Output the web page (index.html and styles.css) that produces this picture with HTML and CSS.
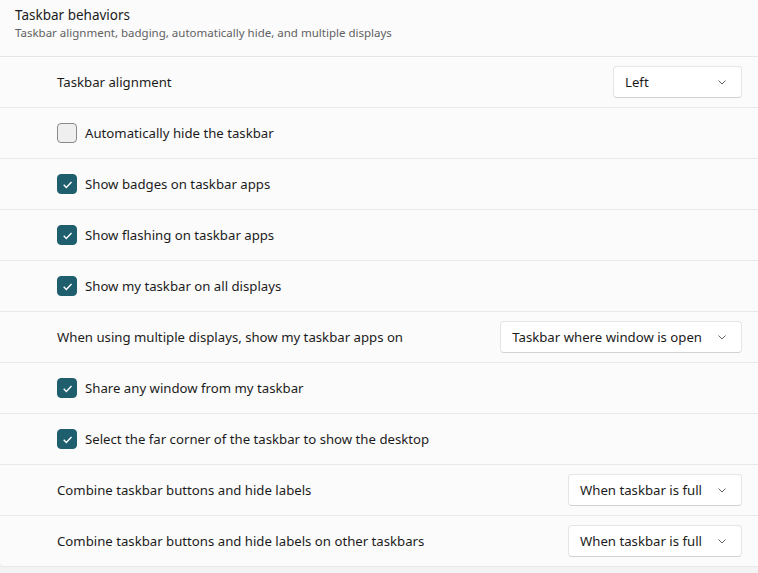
FILE: index.html
```html
<!DOCTYPE html>
<html lang="en">
<head>
    <meta charset="UTF-8">
    <meta name="viewport" content="width=device-width, initial-scale=1.0">
    <title>Taskbar behaviors</title>
    <link rel="stylesheet" href="styles.css">
</head>
<body>
    <div class="card">
        <div class="card-header">
            <div class="title">Taskbar behaviors</div>
            <div class="subtitle">Taskbar alignment, badging, automatically hide, and multiple displays</div>
        </div>
        <div class="row">
            <span class="label">Taskbar alignment</span>
            <div class="select">Left <svg class="chev" viewBox="0 0 8 5"><path d="M0.5 0.5l3.5 3.5 3.5-3.5"/></svg></div>
        </div>
        <div class="row">
            <span class="box"></span>
            <span class="label">Automatically hide the taskbar</span>
        </div>
        <div class="row">
            <span class="box on"><svg viewBox="0 0 12 12"><path d="M2.5 6.3l2.4 2.4 4.8-5"/></svg></span>
            <span class="label">Show badges on taskbar apps</span>
        </div>
        <div class="row">
            <span class="box on"><svg viewBox="0 0 12 12"><path d="M2.5 6.3l2.4 2.4 4.8-5"/></svg></span>
            <span class="label">Show flashing on taskbar apps</span>
        </div>
        <div class="row">
            <span class="box on"><svg viewBox="0 0 12 12"><path d="M2.5 6.3l2.4 2.4 4.8-5"/></svg></span>
            <span class="label">Show my taskbar on all displays</span>
        </div>
        <div class="row">
            <span class="label">When using multiple displays, show my taskbar apps on</span>
            <div class="select">Taskbar where window is open <svg class="chev" viewBox="0 0 8 5"><path d="M0.5 0.5l3.5 3.5 3.5-3.5"/></svg></div>
        </div>
        <div class="row">
            <span class="box on"><svg viewBox="0 0 12 12"><path d="M2.5 6.3l2.4 2.4 4.8-5"/></svg></span>
            <span class="label">Share any window from my taskbar</span>
        </div>
        <div class="row">
            <span class="box on"><svg viewBox="0 0 12 12"><path d="M2.5 6.3l2.4 2.4 4.8-5"/></svg></span>
            <span class="label">Select the far corner of the taskbar to show the desktop</span>
        </div>
        <div class="row">
            <span class="label">Combine taskbar buttons and hide labels</span>
            <div class="select">When taskbar is full <svg class="chev" viewBox="0 0 8 5"><path d="M0.5 0.5l3.5 3.5 3.5-3.5"/></svg></div>
        </div>
        <div class="row">
            <span class="label">Combine taskbar buttons and hide labels on other taskbars</span>
            <div class="select">When taskbar is full <svg class="chev" viewBox="0 0 8 5"><path d="M0.5 0.5l3.5 3.5 3.5-3.5"/></svg></div>
        </div>
    </div>
</body>
</html>
```

FILE: styles.css
```css
body { margin: 0; background: #f3f3f3; font-family: "Noto Sans", "Open Sans", sans-serif; color: #1b1b1b; overflow: hidden; }
.card { background: #fbfbfb; margin-right: -10px; border-bottom: 1px solid #e8e8e8; border-radius: 0 0 6px 4px; }
.card-header { height: 57px; padding: 5px 15px 0; box-sizing: border-box; border-bottom: 1px solid #e6e6e6; }
.title { font-size: 13.5px; line-height: 20px; }
.subtitle { font-size: 11.5px; line-height: 16px; color: #616161; }
.row { height: 50px; display: flex; align-items: center; padding: 0 26px 0 57px; border-bottom: 1px solid #e8e8e8; }
.row:last-child { border-bottom: none; }
.label { font-size: 13.2px; flex: 1; }
.box { width: 18px; height: 18px; border: 1px solid #8a8a8a; border-radius: 4px; background: #efefef; margin-right: 8px; display: flex; align-items: center; justify-content: center; }
.box.on { background: #1f5f6d; border-color: #1f5f6d; }
.box svg { width: 13px; height: 13px; fill: none; stroke: #fff; stroke-width: 1.3; }
.select { height: 32px; min-width: 129px; box-sizing: border-box; background: #fff; border: 1px solid #e5e5e5; border-bottom-color: #d2d2d2; border-radius: 4px; display: flex; align-items: center; padding: 0 15px 0 11px; font-size: 13.2px; gap: 16px; }
.chev { width: 8px; height: 5px; fill: none; stroke: #666; stroke-width: 1; margin-left: auto; }
```
